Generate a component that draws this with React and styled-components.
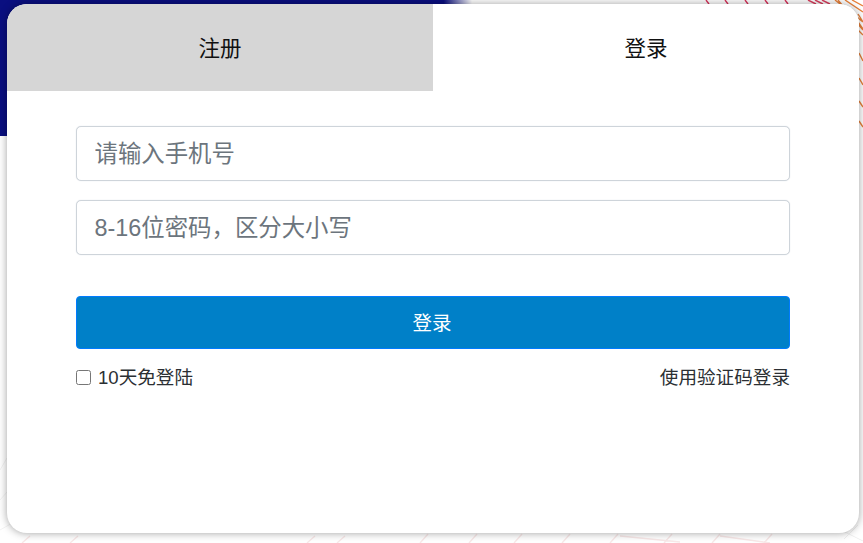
import React, { useState } from "react";
import styled, { createGlobalStyle } from "styled-components";

const GlobalStyle = createGlobalStyle`
  html, body {
    margin: 0;
    padding: 0;
    height: 100%;
    background: #fff;
    font-family: "Liberation Sans", "Noto Sans CJK SC", sans-serif;
    overflow: hidden;
  }
`;

function Backdrop() {
  return (
    <BackdropSvg viewBox="0 0 863 543" width="863" height="543">
      <defs>
        <linearGradient id="navy" x1="0" x2="1" y1="0" y2="0">
          <stop offset="0.94" stopColor="#0a0f80" />
          <stop offset="1" stopColor="#0a0f80" stopOpacity="0" />
        </linearGradient>
        <filter id="soft">
          <feGaussianBlur stdDeviation="0.7" />
        </filter>
      </defs>
      <rect x="0" y="0" width="472" height="136" fill="url(#navy)" />
      {[706, 725, 745, 765, 785].map((x) => (
        <path key={x} d={`M${x} 0 l3 4`} stroke="#d9305a" strokeWidth="1.4" fill="none" />
      ))}
      <path d="M808 0 l8 4 M815 0 l8 4 M822 0 l8 4" stroke="#dc4060" strokeWidth="1.4" fill="none" />
      <path
        d="M835 0 l28 22 M845 0 l18 12 M852 0 l11 6 M838 0 l25 30 M858 14 l5 8 M858 22 l5 7 M858 30 l5 5"
        stroke="#e8813a"
        strokeWidth="1.4"
        fill="none"
      />
      <path
        d="M859 53 l4 8 M859 78 l4 7 M859 101 l4 6 M859 121 l4 6"
        stroke="#e8813a"
        strokeWidth="1.4"
        fill="none"
      />
      <g filter="url(#soft)">
        <path
          d="M30 536 l-8 7 M78 536 l-8 7 M315 536 l-8 7 M345 536 l-8 7 M428 534 l-8 9 M477 534 l-8 9 M522 534 l-8 9 M570 534 l-8 9 M618 534 l-8 9 M672 534 l-8 9 M720 534 l-8 9 M772 534 l-8 9 M620 536 l60 6 M720 536 l50 7"
          stroke="#f8e8e8"
          strokeWidth="1.4"
          fill="none"
        />
        <path d="M845 532 l18 9 M858 525 l-14 14" stroke="#f0f0f0" strokeWidth="1" fill="none" />
        <path d="M0 470 l7 -12 M0 500 l7 -8 M0 530 l14 -8" stroke="#f3f3f3" strokeWidth="1" fill="none" />
      </g>
    </BackdropSvg>
  );
}

function App() {
  const [tab] = useState("login");
  return (
    <Page>
      <GlobalStyle />
      <Backdrop />
      <Card>
        <Tabs>
          <Tab>注册</Tab>
          <Tab active={tab === "login"}>登录</Tab>
        </Tabs>
        <Form>
          <Fields>
            <Input type="text" placeholder="请输入手机号" />
            <Input type="password" placeholder="8-16位密码，区分大小写" />
          </Fields>
          <Submit type="button">登录</Submit>
          <Options>
            <Remember>
              <Check type="checkbox" />
              10天免登陆
            </Remember>
            <SwitchLink href="#">使用验证码登录</SwitchLink>
          </Options>
        </Form>
      </Card>
    </Page>
  );
}

export default App;

const Page = styled.div`
  position: relative;
  width: 863px;
  height: 543px;
  padding: 4px 4px 10px 7px;
  box-sizing: border-box;
  overflow: hidden;
`;

const BackdropSvg = styled.svg`
  position: absolute;
  top: 0;
  left: 0;
`;

const Card = styled.div`
  position: relative;
  height: 529px;
  background: #fff;
  border-radius: 20px;
  box-shadow: 0 0 9px rgba(0, 0, 0, 0.38);
  overflow: hidden;
`;

const Tabs = styled.div`
  display: flex;
  height: 87px;
`;

const Tab = styled.div`
  width: 426px;
  flex: ${(props) => (props.active ? 1 : "none")};
  display: flex;
  align-items: center;
  justify-content: center;
  padding-bottom: 3px;
  box-sizing: border-box;
  font-size: 21.5px;
  color: #111;
  background: ${(props) => (props.active ? "#fff" : "#d6d6d6")};
`;

const Form = styled.div`
  padding: 35px 69px 0;
`;

const Fields = styled.div`
  display: flex;
  flex-direction: column;
  gap: 19px;
`;

const Input = styled.input`
  box-sizing: border-box;
  width: 100%;
  height: 55px;
  padding: 2px 18px 0 17.5px;
  border: 1px solid #ced4da;
  border-radius: 5px;
  box-shadow: 0 0 1px #ced4da;
  outline: none;
  font-family: inherit;
  font-size: 23.4px;
  color: #495057;
  &::placeholder {
    color: #6c757d;
    opacity: 1;
  }
`;

const Submit = styled.button`
  display: block;
  width: 100%;
  height: 53px;
  margin-top: 41px;
  padding: 0 2px 2px 0;
  border: 1px solid #007bff;
  border-radius: 4px;
  background: #0080c8;
  color: #fff;
  font-family: inherit;
  font-size: 19.5px;
`;

const Options = styled.div`
  display: flex;
  justify-content: space-between;
  align-items: center;
  margin-top: 15px;
  font-size: 18.6px;
  line-height: 27px;
  color: #2b2f33;
`;

const Remember = styled.label`
  display: flex;
  align-items: center;
`;

const Check = styled.input`
  width: 15px;
  height: 15px;
  margin: 0 7px 1px 0;
`;

const SwitchLink = styled.a`
  color: #2b2f33;
  text-decoration: none;
`;
